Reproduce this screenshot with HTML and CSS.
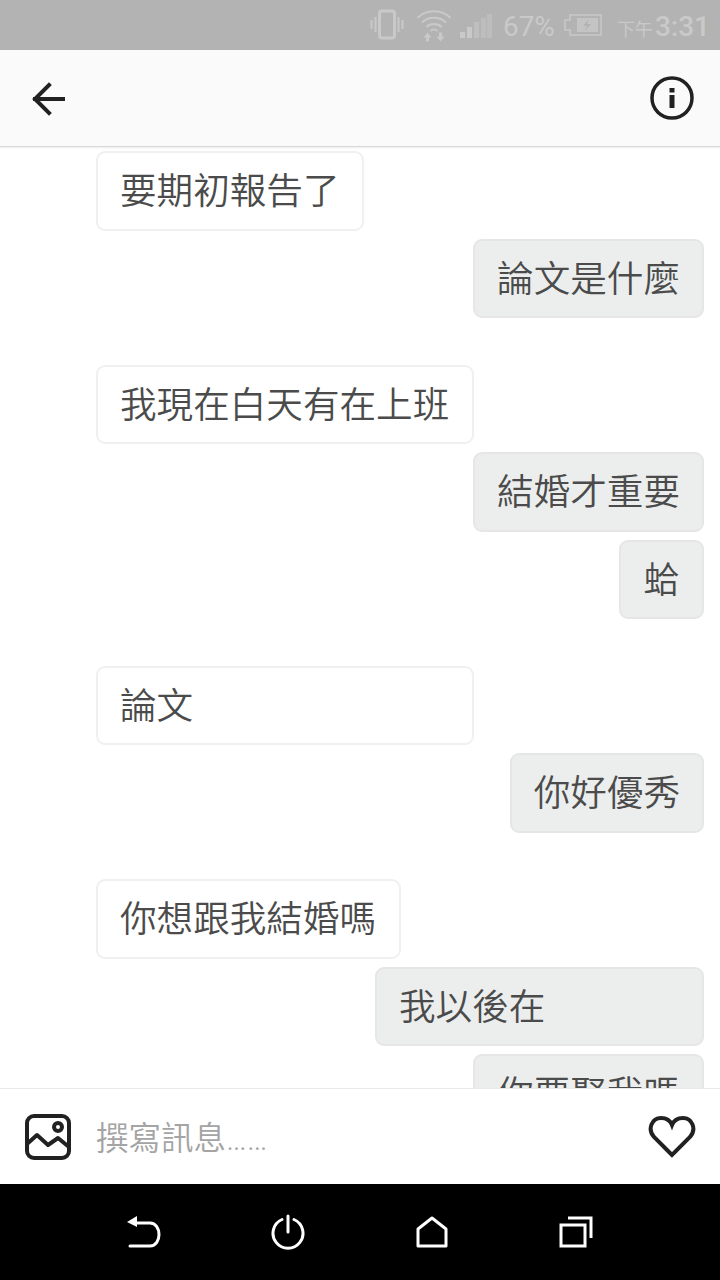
FILE: index.html
```html
<!DOCTYPE html>
<html lang="zh-Hant">

<head>
    <meta charset="UTF-8">
    <meta name="viewport" content="width=device-width, initial-scale=1.0">
    <title>Messages</title>
    <link rel="stylesheet" href="styles.css">
</head>

<body>
    <div class="screen">
        <div class="status-bar">
            <svg class="st-vibrate" width="34" height="34" viewBox="0 0 34 34" fill="none" stroke="#c9c9c9">
                <rect x="9.500" y="3" width="15" height="27" rx="2.500" stroke-width="3"/>
                <path d="M5.500 9v15M1.500 12v9M28.500 9v15M32.500 12v9" stroke-width="2"/>
            </svg>
            <svg class="st-wifi" width="36" height="34" viewBox="0 0 36 34" fill="none" stroke="#c9c9c9" stroke-width="2">
                <path d="M1.500 10C10 1 26 1 34.500 10"/>
                <path d="M6 14.500C12 8 24 8 30 14.500"/>
                <path d="M10.500 19C14.500 15 21.500 15 25.500 19"/>
                <path d="M14.500 23C16.500 21 19.500 21 21.500 23"/>
                <path d="M11.500 24.500l4 5h-2.500v4h-3v-4h-2.500zM24.500 33.500l4-5h-2.500v-4h-3v4h-2.500z" fill="#c9c9c9" stroke="none"/>
            </svg>
            <svg class="st-signal" width="32" height="26" viewBox="0 0 32 26">
                <rect x="0" y="19" width="5" height="6" fill="#c9c9c9"/>
                <rect x="7" y="14" width="5" height="11" fill="#c9c9c9"/>
                <rect x="14" y="9" width="5" height="16" fill="#bfbfbf"/>
                <rect x="21" y="5" width="5" height="20" fill="#bdbdbd"/>
                <rect x="27" y="1" width="5" height="24" fill="#bdbdbd"/>
            </svg>
            <span class="st-percent">67%</span>
            <svg class="st-battery" width="38" height="22" viewBox="0 0 38 22" fill="none">
                <path d="M37 1H6v5H1v10h5v5h31z" stroke="#c9c9c9" stroke-width="1.500"/>
                <rect x="13" y="4" width="21" height="14" fill="#c4c4c4"/>
                <path d="M25 5l-6 7h4l-2 5 6-7h-4z" fill="#b3b3b3"/>
            </svg>
            <span class="st-ampm">下午</span><span class="st-time">3:31</span>
        </div>

        <header class="top-bar">
            <svg class="back-icon" width="36" height="36" viewBox="0 0 36 36" fill="none" stroke="#212121" stroke-width="4" stroke-linecap="square">
                <path d="M32 18H4M18 4L4 18l14 14"/>
            </svg>
            <svg class="info-icon" width="44" height="44" viewBox="0 0 44 44" fill="none" stroke="#212121">
                <circle cx="22" cy="22" r="20" stroke-width="3.500"/>
                <path d="M22 19v13" stroke-width="5"/>
                <rect x="19.500" y="12" width="5" height="4.500" fill="#212121" stroke="none"/>
            </svg>
        </header>

        <main class="thread">
            <div class="bubble them">要期初報告了</div>
            <div class="bubble me">論文是什麼</div>

            <div class="bubble them group-start">我現在白天有在上班</div>
            <div class="bubble me">結婚才重要</div>
            <div class="bubble me">蛤</div>

            <div class="bubble them group-start w-378">論文</div>
            <div class="bubble me">你好優秀</div>

            <div class="bubble them group-start">你想跟我結婚嗎</div>
            <div class="bubble me w-329">我以後在</div>
            <div class="bubble me">你要娶我嗎</div>
        </main>

        <footer class="composer">
            <svg class="photo-icon" width="46" height="46" viewBox="0 0 46 46" fill="none" stroke="#212121" stroke-width="4" stroke-linejoin="round" stroke-linecap="round">
                <rect x="2" y="2" width="42" height="42" rx="7"/>
                <path d="M2 30l10-9 11 10 10-7 11 9"/>
                <circle cx="33" cy="13" r="4"/>
            </svg>
            <span class="placeholder">撰寫訊息……</span>
            <svg class="heart-icon" width="48" height="42" viewBox="0 0 48 42" fill="none" stroke="#212121" stroke-width="4" stroke-linejoin="miter">
                <path d="M24 39L6 21C-1 13 4 2 13 2c5 0 9 2 11 7 2-5 6-7 11-7 9 0 14 11 7 19z"/>
            </svg>
        </footer>

        <nav class="nav-bar">
            <svg width="36" height="34" viewBox="0 0 36 34" fill="none" stroke="#fff" stroke-width="3" stroke-linecap="round">
                <path d="M8 8h16c12 0 12 23 0 23H4"/>
                <path d="M11 1L1 7l10 5z" fill="#fff" stroke="none"/>
            </svg>
            <svg width="34" height="36" viewBox="0 0 34 36" fill="none" stroke="#fff" stroke-width="3" stroke-linecap="round">
                <path d="M11 5.500a15 15 0 1 0 12 0"/>
                <path d="M17 2v16"/>
            </svg>
            <svg width="32" height="32" viewBox="0 0 32 32" fill="none" stroke="#fff" stroke-width="3" stroke-linejoin="round">
                <path d="M2 30V13L16 2l14 11v17z"/>
            </svg>
            <svg width="34" height="32" viewBox="0 0 34 32" fill="none" stroke="#fff" stroke-width="3">
                <rect x="2" y="9" width="24" height="21"/>
                <path d="M9 2h23v20"/>
            </svg>
        </nav>
    </div>
</body>

</html>
```

FILE: styles.css
```css
* {
    box-sizing: border-box;
}

body {
    margin: 0;
    background: #fff;
    font-family: "Noto Sans CJK TC", "Noto Sans", sans-serif;
}

.screen {
    width: 720px;
    height: 1280px;
    display: flex;
    flex-direction: column;
    overflow: hidden;
}

/* status bar */
.status-bar {
    height: 50px;
    flex: none;
    display: flex;
    align-items: center;
    justify-content: flex-end;
    padding-right: 10px;
    background: #b3b3b3;
    color: #c9c9c9;
    font-family: Roboto, sans-serif;
}

.st-vibrate {
    margin-right: 12px;
}

.st-wifi {
    margin-right: 8px;
}

.st-signal {
    margin-right: 11px;
    margin-top: 2px;
}

.st-percent {
    font-size: 28px;
    margin-top: 2px;
    margin-right: 9px;
}

.st-battery {
    margin-right: 15px;
}

.st-ampm {
    font-family: "Noto Sans CJK TC", sans-serif;
    font-size: 18px;
    margin-top: 6px;
}

.st-time {
    font-size: 28px;
    font-weight: 500;
    margin-top: 2px;
    margin-left: 2px;
}

/* header */
.top-bar {
    height: 97px;
    flex: none;
    display: flex;
    align-items: center;
    justify-content: space-between;
    padding: 0 26px 0 30px;
    background: #fafafa;
    border-bottom: 1px solid #d8d8d8;
    box-shadow: 0 1px 2px rgba(0, 0, 0, 0.08);
    position: relative;
    z-index: 1;
}

.back-icon {
    margin-left: 1px;
    margin-top: 2px;
}

/* messages */
.thread {
    flex: 1;
    min-height: 0;
    overflow: hidden;
    display: flex;
    flex-direction: column;
    padding: 4px 16px 0 96px;
}

.bubble {
    flex: none;
    height: 79.500px;
    display: flex;
    align-items: center;
    padding: 0 22px 2px;
    margin-top: 8px;
    border: 2px solid #f0f0f0;
    border-radius: 9px;
    font-size: 36.600px;
    font-weight: 350;
    line-height: 1;
    color: #4b4b4b;
}

.thread .bubble:first-child {
    margin-top: 0;
}

.them {
    align-self: flex-start;
    padding-right: 23px;
    background: #fff;
}

.me {
    align-self: flex-end;
    background: #eceeee;
    border-color: #e6e6e6;
}

.group-start {
    margin-top: 46.500px;
}

.w-378 {
    width: 378px;
}

.w-329 {
    width: 329px;
}

/* input row */
.composer {
    height: 96px;
    flex: none;
    display: flex;
    align-items: center;
    padding: 0 24px 0 25px;
    background: #fff;
    border-top: 1px solid #e8e8e8;
}

.placeholder {
    flex: 1;
    margin-left: 25px;
    margin-bottom: 3px;
    font-family: Roboto, "Noto Sans CJK TC", sans-serif;
    font-size: 32.500px;
    font-weight: 350;
    color: #a4a4a4;
}

/* android buttons */
.nav-bar {
    height: 96px;
    flex: none;
    display: grid;
    grid-template-columns: repeat(4, 144px);
    align-items: center;
    justify-items: center;
    padding-left: 72px;
    background: #000;
}
```
